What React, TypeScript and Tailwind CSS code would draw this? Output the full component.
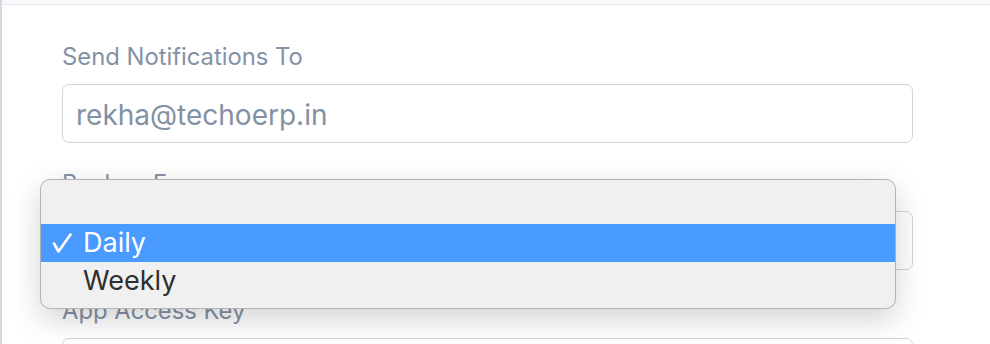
const font = { fontFamily: "Inter, 'Liberation Sans', Arial, sans-serif" };

function Field({ label, children }: { label: string; children?: React.ReactNode }) {
  return (
    <div className="flex flex-col">
      <label className="mb-[11px] text-[23.8px] leading-[32px] text-[#8492a6]">{label}</label>
      {children}
    </div>
  );
}

function Box({ value }: { value?: string }) {
  return (
    <div className="flex h-[59px] items-center rounded-[7px] border-[1.5px] border-[#cfd5dc] bg-white px-[13px] pt-[2px] text-[28px] text-[#8391a2]">
      {value}
    </div>
  );
}

function Check() {
  return (
    <svg className="h-[20px] w-[20px]" viewBox="0 0 20 20" fill="none" stroke="currentColor" strokeWidth="2.6" strokeLinecap="round" strokeLinejoin="round" aria-hidden>
      <path d="M2 10.5L6.5 18.5L18.5 1.5" />
    </svg>
  );
}

export default function App() {
  return (
    <div className="flex h-[344px] w-[990px] overflow-hidden bg-white" style={font}>
      <div className="w-[2px] shrink-0 bg-[#d3d9e0]" />
      <div className="relative flex-1">
        <div className="h-[5px] border-b border-[#e6e9ed] bg-[#f7f8fa]" />
        <div className="flex flex-col gap-[25px] pl-[60px] pr-[77px] pt-[36px]">
          <Field label="Send Notifications To">
            <Box value="rekha@techoerp.in" />
          </Field>
          <Field label="Backup Frequency">
            <Box />
          </Field>
          <Field label="App Access Key">
            <Box />
          </Field>
        </div>

        {/* native select popup */}
        <div className="absolute left-[38px] top-[179px] w-[856px] rounded-[10px] border border-[#b3b3b3] bg-[#f0f0f0] pb-[8px] pt-[6px] text-[27px] shadow-[0_10px_30px_rgba(0,0,0,0.18)]">
          <div className="h-[38px]" />
          <div className="flex h-[38px] items-center bg-[#4a9bff] text-white">
            <span className="flex w-[42px] pl-[11px]">
              <Check />
            </span>
            <span>Daily</span>
          </div>
          <div className="flex h-[38px] items-center text-[#2e2e2e]">
            <span className="w-[42px]" />
            <span>Weekly</span>
          </div>
        </div>
      </div>
    </div>
  );
}
